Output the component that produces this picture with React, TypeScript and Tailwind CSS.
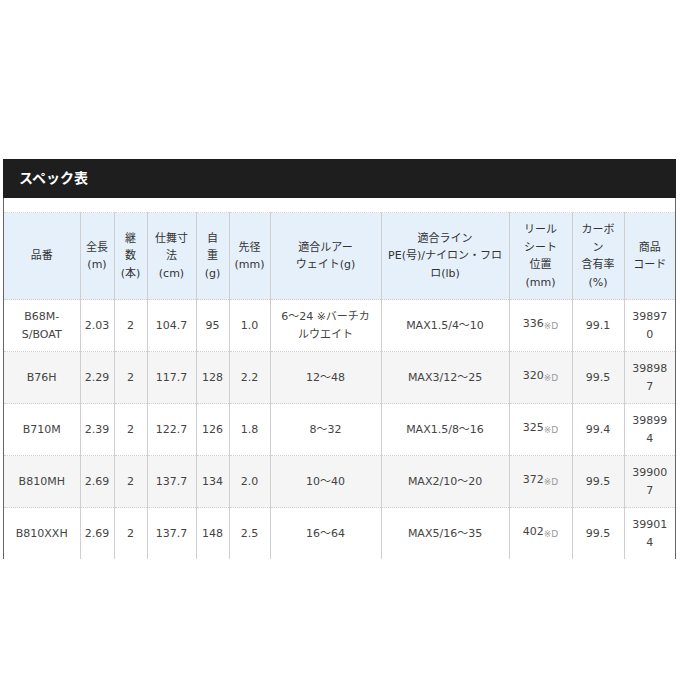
import React from "react";

const font = { fontFamily: '"DejaVu Sans", "Noto Sans CJK JP", sans-serif' };

const headers: string[][] = [
  ["品番"],
  ["全長", "(m)"],
  ["継", "数", "(本)"],
  ["仕舞寸", "法", "(cm)"],
  ["自", "重", "(g)"],
  ["先径", "(mm)"],
  ["適合ルアー", "ウェイト(g)"],
  ["適合ライン", "PE(号)/ナイロン・フロ", "ロ(lb)"],
  ["リール", "シート", "位置", "(mm)"],
  ["カーボ", "ン", "含有率", "(%)"],
  ["商品", "コード"],
];

const widths = [76, 34, 33, 49, 33, 41, 111, 128, 63, 52, 51];

type Row = {
  name: string[];
  len: string;
  pcs: string;
  closed: string;
  weight: string;
  tip: string;
  lure: string[];
  line: string;
  seat: string;
  carbon: string;
  code: string[];
};

const rows: Row[] = [
  { name: ["B68M-", "S/BOAT"], len: "2.03", pcs: "2", closed: "104.7", weight: "95", tip: "1.0", lure: ["6～24 ※バーチカ", "ルウエイト"], line: "MAX1.5/4～10", seat: "336", carbon: "99.1", code: ["39897", "0"] },
  { name: ["B76H"], len: "2.29", pcs: "2", closed: "117.7", weight: "128", tip: "2.2", lure: ["12～48"], line: "MAX3/12～25", seat: "320", carbon: "99.5", code: ["39898", "7"] },
  { name: ["B710M"], len: "2.39", pcs: "2", closed: "122.7", weight: "126", tip: "1.8", lure: ["8～32"], line: "MAX1.5/8～16", seat: "325", carbon: "99.4", code: ["39899", "4"] },
  { name: ["B810MH"], len: "2.69", pcs: "2", closed: "137.7", weight: "134", tip: "2.0", lure: ["10～40"], line: "MAX2/10～20", seat: "372", carbon: "99.5", code: ["39900", "7"] },
  { name: ["B810XXH"], len: "2.69", pcs: "2", closed: "137.7", weight: "148", tip: "2.5", lure: ["16～64"], line: "MAX5/16～35", seat: "402", carbon: "99.5", code: ["39901", "4"] },
];

function Lines({ lines }: { lines: string[] }) {
  return (
    <>
      {lines.map((l, i) => (
        <React.Fragment key={i}>
          {i > 0 && <br />}
          {l}
        </React.Fragment>
      ))}
    </>
  );
}

const cell =
  "border-l border-[#cfcfcf] first:border-l-0 px-[2px] py-[8px] text-center align-middle whitespace-nowrap";

export default function App() {
  return (
    <div className="min-h-[680px] bg-white pt-[159px] pl-[3px]" style={font}>
      <div className="w-[673px]">
        {/* タイトル */}
        <div className="h-[39px] bg-[#1e1e1e] flex items-center pl-[16px] text-white font-bold text-[14px]">
          スペック表
        </div>

        <div className="border-x border-[#666] pt-[14px]">
          <table className="w-full table-fixed border-collapse text-[11px] leading-[17.5px] text-[#444]">
            <colgroup>
              {widths.map((w, i) => (
                <col key={i} style={{ width: w }} />
              ))}
            </colgroup>
            <thead>
              <tr className="h-[87px] bg-[#e6f0fb] border-t border-dotted border-[#d6d6d6]">
                {headers.map((h, i) => (
                  <th key={i} className={cell + " font-normal text-[#333]"}>
                    <Lines lines={h} />
                  </th>
                ))}
              </tr>
            </thead>
            <tbody>
              {rows.map((r, i) => (
                <tr
                  key={i}
                  className={
                    "h-[51.5px] border-t border-dotted border-[#cfcfcf] " +
                    (i % 2 === 1 ? "bg-[#f5f5f5]" : "bg-white")
                  }
                >
                  <td className={cell}>
                    <Lines lines={r.name} />
                  </td>
                  <td className={cell}>{r.len}</td>
                  <td className={cell}>{r.pcs}</td>
                  <td className={cell}>{r.closed}</td>
                  <td className={cell}>{r.weight}</td>
                  <td className={cell}>{r.tip}</td>
                  <td className={cell}>
                    <Lines lines={r.lure} />
                  </td>
                  <td className={cell}>{r.line}</td>
                  <td className={cell}>
                    {r.seat}
                    <span className="text-[9px] text-[#999] align-[-2px]">※D</span>
                  </td>
                  <td className={cell}>{r.carbon}</td>
                  <td className={cell}>
                    <Lines lines={r.code} />
                  </td>
                </tr>
              ))}
            </tbody>
          </table>
        </div>
      </div>
    </div>
  );
}
